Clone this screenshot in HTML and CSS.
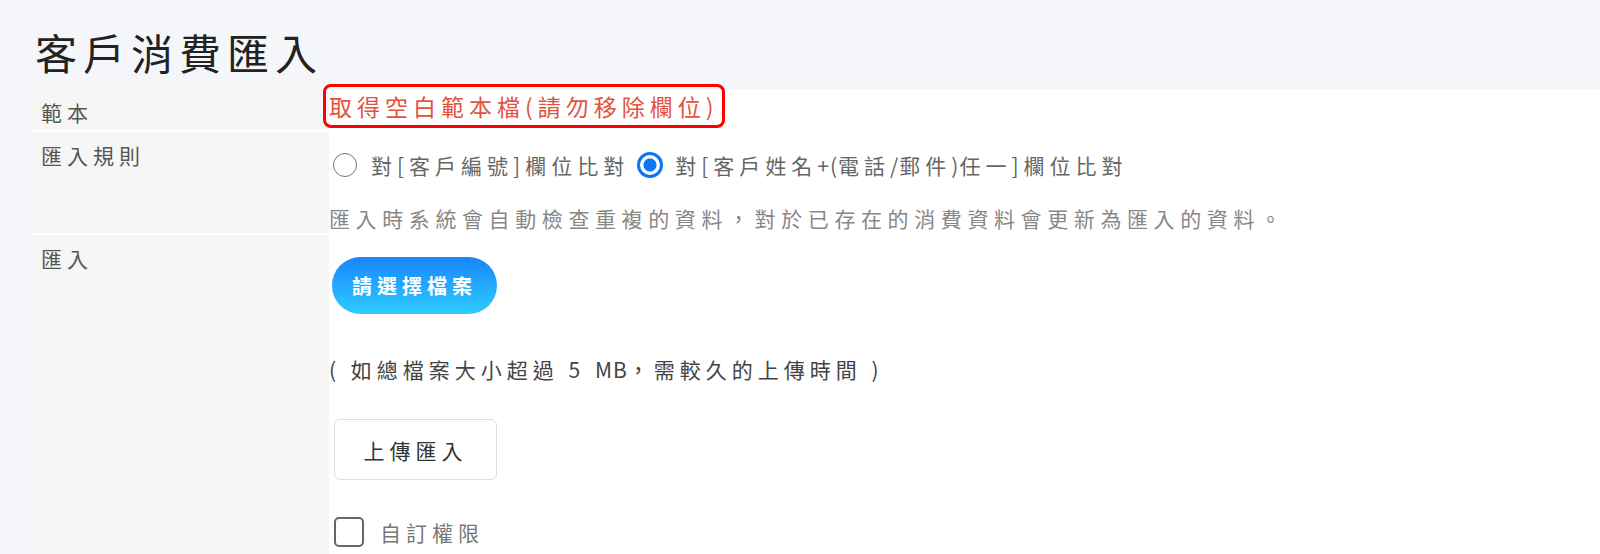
FILE: index.html
```html
<!DOCTYPE html>
<html lang="zh-Hant">
<head>
<meta charset="UTF-8">
<meta name="viewport" content="width=device-width, initial-scale=1.0">
<title>客戶消費匯入</title>
<link rel="stylesheet" href="styles.css">
</head>
<body>
<h1 class="page-title">客戶消費匯入</h1>
<div class="form-grid">
    <div class="label">範本</div>
    <div class="field field-template">
        <a class="template-link" href="#">取得空白範本檔(請勿移除欄位)</a>
    </div>

    <div class="label">匯入規則</div>
    <div class="field field-rule">
        <div class="radio-row">
            <label class="radio"><input type="radio" name="rule" value="no"><span>對[客戶編號]欄位比對</span></label>
            <label class="radio"><input type="radio" name="rule" value="name" checked><span>對[客戶姓名<span class="latin">+(</span>電話<span class="latin">/</span>郵件<span class="latin">)</span>任一]欄位比對</span></label>
        </div>
        <p class="hint">匯入時系統會自動檢查重複的資料，對於已存在的消費資料會更新為匯入的資料。</p>
    </div>

    <div class="label">匯入</div>
    <div class="field field-import">
        <button class="btn-file" type="button">請選擇檔案</button>
        <p class="note">( 如總檔案大小超過 5 <span class="latin">MB</span>，需較久的上傳時間 )</p>
        <button class="btn-upload" type="button">上傳匯入</button>
        <label class="check"><input type="checkbox"><span>自訂權限</span></label>
    </div>
</div>
</body>
</html>
```

FILE: styles.css
```css
body {
margin: 0;
background-color: #f5f6fa;
font-family: "Noto Sans CJK TC", "Noto Sans", sans-serif;
color: #555;
}
.page-title {
margin: 0;
padding: 27px 0 12px 35px;
font-size: 42px;
line-height: 50px;
font-weight: 400;
letter-spacing: 6px;
color: #222;
}
.form-grid {
display: grid;
grid-template-columns: 299px 1fr;
row-gap: 2px;
margin-left: 30px;
background: #fff;
min-height: calc(100vh - 89px);
font-size: 21px;
line-height: 30px;
letter-spacing: 5px;
}
.latin {
letter-spacing: 1px;
}
.label {
background: #f6f6f6;
padding: 8px 0 0 11px;
color: #555;
}
.field {
background: #fff;
}
.field-template {
padding-top: 1px;
height: 39px;
}
.template-link {
display: inline-block;
line-height: 32px;
font-size: 23px;
letter-spacing: 5px;
color: #e3523e;
text-decoration: none;
outline: 3px solid #ff0000;
outline-offset: 3px;
border-radius: 2px;
}
.field-rule {
padding-top: 18px;
}
.radio-row {
display: flex;
align-items: center;
}
.radio {
display: flex;
align-items: center;
color: #666;
margin-right: 8px;
}
.radio input {
appearance: none;
width: 24px;
height: 24px;
margin: 0 14px 0 4px;
border: 1.5px solid #767676;
border-radius: 50%;
}
.radio input:checked {
width: 26px;
height: 26px;
margin-left: 0;
margin-right: 12px;
border: 3px solid #0a75f5;
background: radial-gradient(circle, #0a75f5 0 6px, #fff 7px);
}
.hint {
margin: 23px 0 0;
color: #888;
letter-spacing: 5.6px;
}
.field-import {
padding: 22px 0 6px;
display: flex;
flex-direction: column;
align-items: flex-start;
}
.btn-file {
margin-left: 3px;
height: 57px;
padding: 0 20px;
border: none;
border-radius: 29px;
background: linear-gradient(to bottom, #1786fb, #2fcbff);
color: #fff;
font-family: inherit;
font-size: 20px;
font-weight: 700;
letter-spacing: 5px;
}
.note {
margin: 40px 0 0;
color: #444;
}
.btn-upload {
margin: 35px 0 0 5px;
width: 163px;
height: 61px;
background: #fff;
border: 1px solid #dedede;
border-radius: 6px;
color: #333;
font-family: inherit;
font-size: 21px;
letter-spacing: 5px;
}
.check {
display: flex;
align-items: center;
margin: 37px 0 0 5px;
color: #777;
}
.check input {
appearance: none;
width: 30px;
height: 30px;
margin: 0 16px 0 0;
border: 2px solid #666;
border-radius: 5px;
}
```
